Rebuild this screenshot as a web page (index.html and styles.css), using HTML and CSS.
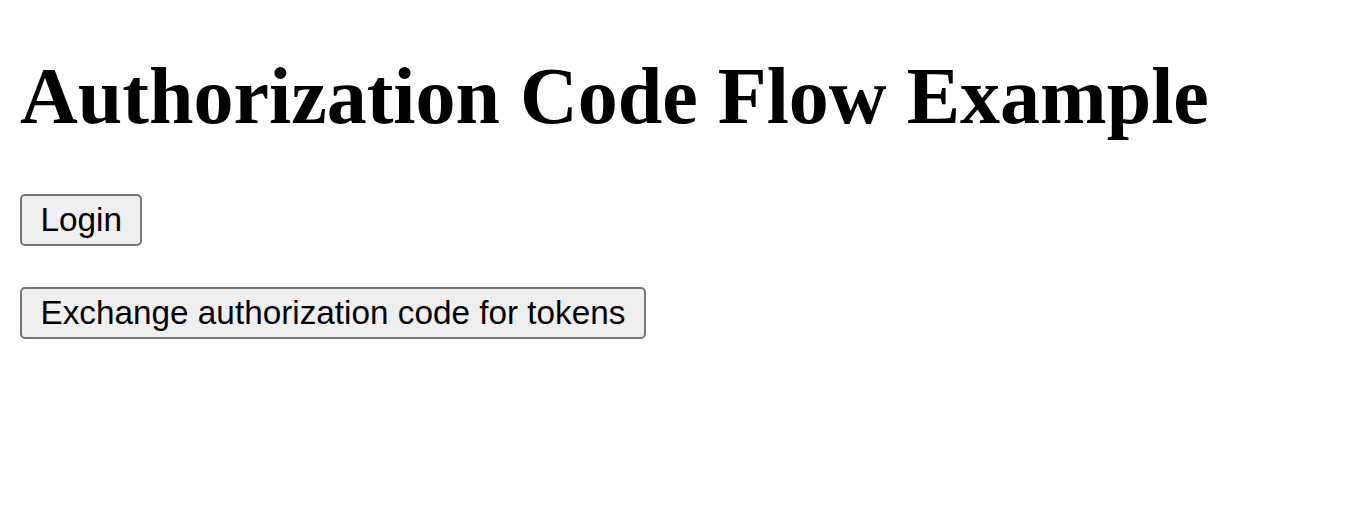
FILE: index.html
```html
<!DOCTYPE html>
<html>
<head>
<meta charset="utf-8">
<title>Authorization Code Flow Example</title>
<link rel="stylesheet" href="styles.css">
</head>
<body>
<h1 class="title">Authorization Code Flow Example</h1>
<div class="actions">
  <button class="btn">Login</button>
  <button class="btn">Exchange authorization code for tokens</button>
</div>
</body>
</html>
```
FILE: styles.css
```css
html, body {
  background: #ffffff;
}
body {
  margin: 20px;
  font-family: "Liberation Serif", "Times New Roman", serif;
  color: #000;
}
.title {
  font-family: "Liberation Serif", "Times New Roman", serif;
  font-weight: bold;
  font-size: 80px;
  margin: 31px 0 52px;
  line-height: normal;
}
.actions {
  display: flex;
  flex-direction: column;
  align-items: flex-start;
  gap: 41px;
}
.btn {
  font-family: "Liberation Sans", Arial, sans-serif;
  font-size: 33.3px;
  color: #000;
  background: #efefef;
  border: 2px solid #767676;
  border-radius: 5px;
  padding: 5px 18.5px;
  line-height: normal;
}
```
